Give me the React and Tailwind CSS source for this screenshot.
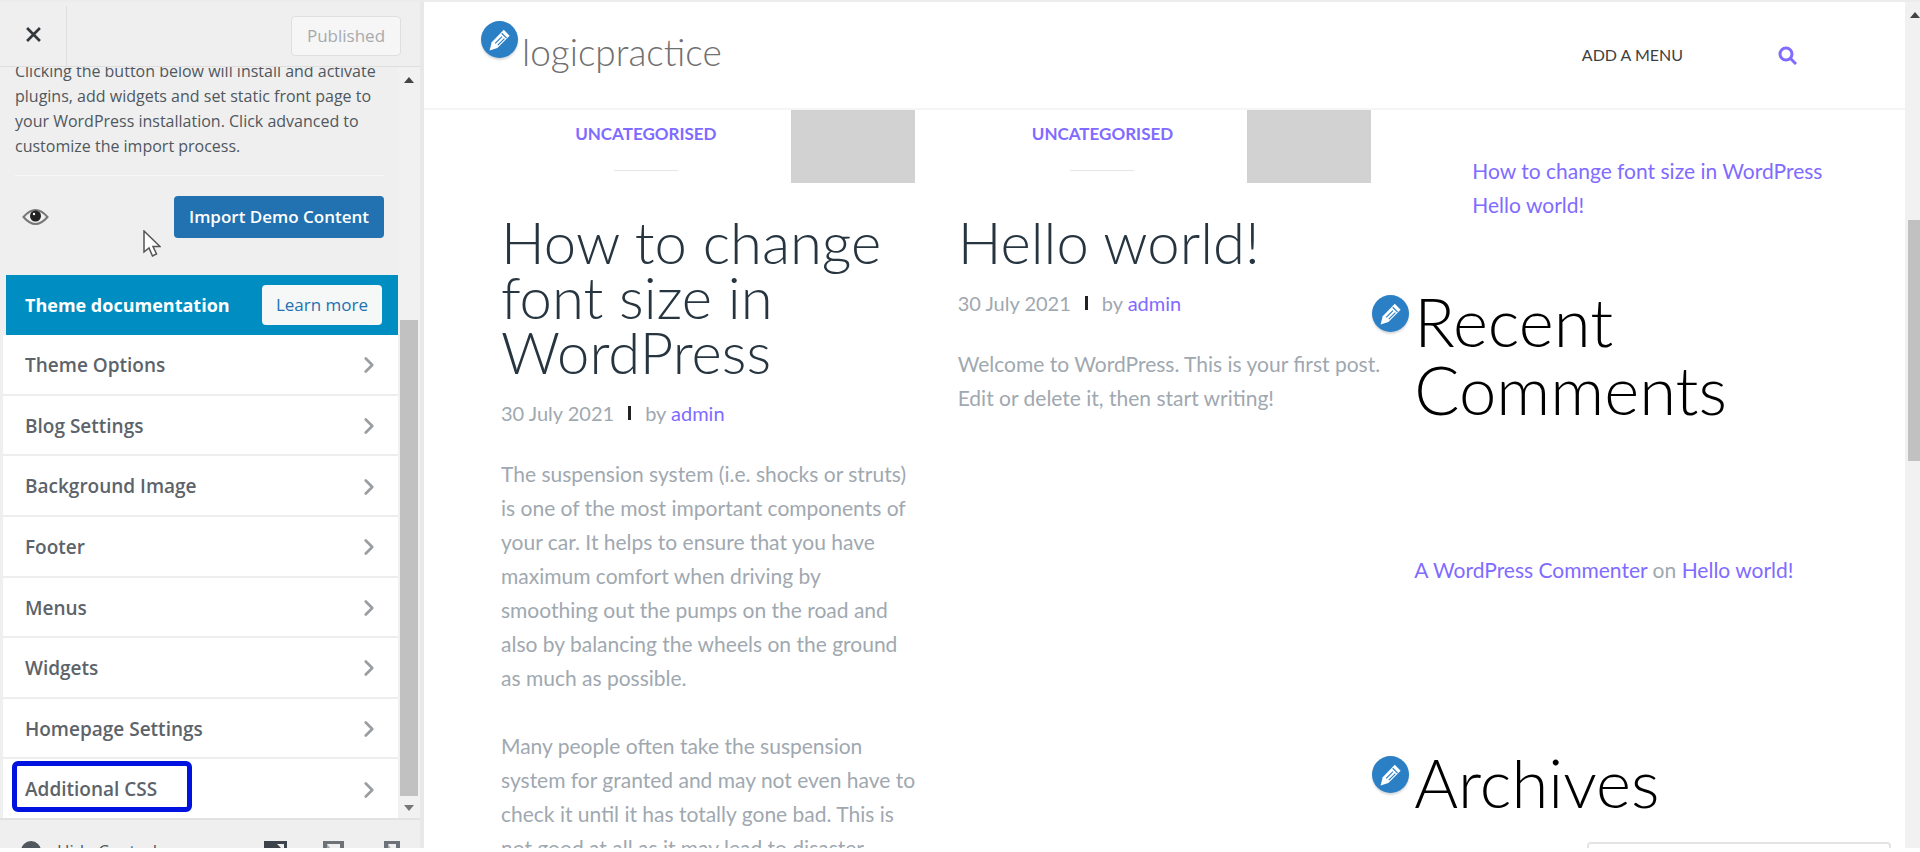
import { ChevronRight } from "lucide-react";

const SECTIONS = [
  "Theme Options",
  "Blog Settings",
  "Background Image",
  "Footer",
  "Menus",
  "Widgets",
  "Homepage Settings",
  "Additional CSS",
];

const POSTS = [
  {
    title: ["How to change", "font size in", "WordPress"],
    body: [
      [
        "The suspension system (i.e. shocks or struts)",
        "is one of the most important components of",
        "your car. It helps to ensure that you have",
        "maximum comfort when driving by",
        "smoothing out the pumps on the road and",
        "also by balancing the wheels on the ground",
        "as much as possible.",
      ],
      [
        "Many people often take the suspension",
        "system for granted and may not even have to",
        "check it until it has totally gone bad. This is",
        "not good at all as it may lead to disaster",
      ],
    ],
  },
  {
    title: ["Hello world!"],
    body: [["Welcome to WordPress. This is your first post.", "Edit or delete it, then start writing!"]],
  },
];

const Lines = ({ lines }) => lines.map((line) => <span key={line} className="block">{line}</span>);

const EditButton = ({ label, className }) => (
  <button
    aria-label={label}
    className={`absolute flex size-[37px] items-center justify-center rounded-full bg-[#2a7fc5] shadow-[0_2px_2px_rgba(60,67,74,0.2)] ${className}`}
  >
    <svg viewBox="0 0 20 20" className="size-[26px]" fill="#fff">
      <path d="M12.9 2.2 17.4 6.7 8 16.2 2 18 3.6 11.7Z" />
      <path d="M6.300 12.600 11.500 7.400M8.300 14 13.400 8.900M11.300 4.800 15.100 8.600" stroke="#2a7fc5" strokeWidth="0.9" fill="none" />
    </svg>
  </button>
);

const Arrow = ({ down }) => (
  <svg viewBox="0 0 10 6" className="h-[6px] w-[10px]" fill={down ? "#777" : "#444"}>
    <path d={down ? "M0 0H10L5 6Z" : "M0 6H10L5 0Z"} />
  </svg>
);

const Customizer = () => (
  <aside className="flex w-[424px] shrink-0 flex-col border-r-4 border-[#e8e8e8] bg-[#efefef] font-['Open_Sans',sans-serif] text-[#50575e]">
    {/* Top bar */}
    <div className="flex h-[65px] shrink-0 items-center justify-between border-b border-[#dedede] pt-1 pr-[19px]">
      <button aria-label="Close" className="flex h-full w-[67px] items-center justify-center border-r border-[#dedede] pb-1">
        <svg viewBox="0 0 14 14" className="size-[15px]" stroke="#32373c" strokeWidth="2.5">
          <path d="M1 1 13 13M13 1 1 13" />
        </svg>
      </button>
      <button disabled className="h-10 w-[110px] rounded border border-[#dfdfdf] bg-[#f6f6f6] text-[17px] text-[#a7aaad]">
        Published
      </button>
    </div>

    <div className="relative flex min-h-0 flex-1">
      <div className="flex min-w-0 flex-1 flex-col">
        {/* Import panel */}
        <div className="h-52 shrink-0 overflow-hidden pr-3.5 pl-[15px]">
          <p className="-mt-2 border-b border-[#f8f8f8] pb-4 text-base leading-[25px] whitespace-nowrap">
            <Lines
              lines={[
                "Clicking the button below will install and activate",
                "plugins, add widgets and set static front page to",
                "your WordPress installation. Click advanced to",
                "customize the import process.",
              ]}
            />
          </p>
          <div className="mt-5 flex items-center justify-between pl-[7px]">
            <button aria-label="Preview">
              <svg viewBox="0 0 26 18" className="h-[18px] w-[27px]" fill="none" stroke="#777" strokeWidth="2">
                <path d="M1 9Q7 2 13 2T25 9Q19 16 13 16T1 9Z" />
                <circle cx="13" cy="8" r="4.5" fill="#222" stroke="#222" />
                <circle cx="11.5" cy="6" r="1.2" fill="#fff" stroke="none" />
              </svg>
            </button>
            <button className="h-[42px] w-[210px] rounded bg-[#2271b1] text-[17px] font-semibold text-white">
              Import Demo Content
            </button>
          </div>
        </div>

        <div className="ml-1.5 flex h-[60px] shrink-0 items-center justify-between bg-[#008ec2] pr-4 pl-[19px]">
          <h3 className="text-lg font-bold text-white">Theme documentation</h3>
          <a href="#docs" className="flex h-10 w-[120px] items-center justify-center rounded-sm bg-[#f6f7f7] text-[17px] text-[#2271b1]">
            Learn more
          </a>
        </div>

        <ul className="ml-[3px] flex min-h-0 flex-1 flex-col bg-white">
          {SECTIONS.map((name) => (
            <li key={name} className="flex-1 border-b-2 border-[#eeeeee] last:border-b-0">
              <button className="flex h-full w-full items-center justify-between pt-0.5 pr-4 pl-[22px] text-[19px] font-semibold text-[#5c636a]">
                {name}
                <ChevronRight className="size-[26px] text-[#9a9ea2]" strokeWidth={2.5} />
              </button>
            </li>
          ))}
        </ul>
      </div>

      {/* Scrollbar */}
      <div className="flex w-[22px] shrink-0 flex-col items-center bg-[#f1f1f1] pt-2.5 pb-[7px]">
        <Arrow />
        <div className="mt-[237px] mb-[9px] w-[18px] flex-1 bg-[#c1c1c1]" />
        <Arrow down />
      </div>

      <div className="absolute bottom-1.5 left-3 h-[51px] w-[180px] rounded-md border-[5px] border-[#0012e0]" />
      <svg viewBox="0 0 18 27" className="absolute top-[163px] left-[143px] h-[27px] w-[18px]" fill="#fff" stroke="#555" strokeWidth="1.5">
        <path d="M1 1V22L6 18 9.500 26 13.500 24 10 16.500H17Z" />
      </svg>
    </div>

    {/* Bottom bar, cut by the window edge */}
    <div className="flex h-[30px] shrink-0 items-start overflow-hidden border-t-2 border-[#e2e2e2] pt-[21px] pl-[21px]">
      <button className="flex w-[243px] items-start gap-4 text-[17px] leading-5">
        <span className="size-5 rounded-full bg-[#50575e]" />
        Hide Controls
      </button>
      <button aria-label="Desktop">
        <svg viewBox="0 0 23 20" className="h-5 w-[23px]">
          <path d="M0 0H23V16H0Z" fill="#3c434a" />
          <path d="M13 3H20V10Z" fill="#efefef" />
        </svg>
      </button>
      <button aria-label="Tablet" className="ml-9">
        <svg viewBox="0 0 21 20" className="h-5 w-[21px]">
          <path d="M0 0H21V20H0Z" fill="#6c7278" />
          <path d="M4 3H17V20H4Z" fill="#efefef" />
          <path d="M4 3 14 16H4Z" fill="#a5a9ad" />
        </svg>
      </button>
      <button aria-label="Mobile" className="ml-10">
        <svg viewBox="0 0 16 20" className="h-5 w-4">
          <path d="M0 0H16V20H0Z" fill="#6c7278" />
          <path d="M4 3H12V20H4Z" fill="#efefef" />
          <path d="M4 3 11 14H4Z" fill="#a5a9ad" />
        </svg>
      </button>
    </div>
  </aside>
);

const Post = ({ title, body }) => (
  <article className="whitespace-nowrap">
    <div className="flex h-[73px]">
      <div className="flex flex-1 flex-col items-center pt-3">
        <a href="#category" className="text-[17px] leading-6 font-bold text-[#7f6bff]">UNCATEGORISED</a>
        <div className="mt-6 h-px w-16 bg-[#e6e6e6]" />
      </div>
      <div className="w-[124px] bg-[#d2d2d2]" />
    </div>
    <h2 className="mt-[31px] text-[58px] leading-[55px] font-light text-[#263540]">
      <Lines lines={title} />
    </h2>
    <div className="mt-[17px] flex items-center text-xl leading-[34px]">
      <span>30 July 2021</span>
      <span className="mx-3.5 h-3.5 w-[3px] bg-[#222]" />
      <span>by <a href="#admin" className="text-[#7f6bff]">admin</a></span>
    </div>
    {body.map((lines) => (
      <p key={lines[0]} className="mt-[27px] mb-[34px] text-[21px] leading-[34px] [p+&]:mt-0">
        <Lines lines={lines} />
      </p>
    ))}
  </article>
);

const Preview = () => (
  <main className="flex min-w-0 flex-1 flex-col overflow-hidden bg-white font-['Lato',sans-serif] text-[#a0a8b0]">
    <header className="flex h-[108px] shrink-0 items-center justify-between border-b-2 border-[#f5f5f5] pr-[108px] pl-[98px]">
      <div className="relative pb-1.5">
        <a href="#home" className="text-[37px] leading-[44px] font-light text-[#707070]">logicpractice</a>
        <EditButton label="Edit site title" className="-top-[9px] -left-[41px]" />
      </div>
      <nav className="flex items-center gap-[95px]">
        <a href="#menu" className="text-base text-[#404040]">ADD A MENU</a>
        <button aria-label="Search">
          <svg viewBox="0 0 19 19" className="size-[19px]" fill="none" stroke="#7f6bff" strokeWidth="3">
            <circle cx="8" cy="8" r="6" />
            <path d="M12.500 12.500 18 18" />
          </svg>
        </button>
      </nav>
    </header>

    <div className="grid min-h-0 flex-1 grid-cols-3 gap-[43px] px-[77px]">
      {POSTS.map((post) => <Post key={post.title[0]} {...post} />)}

      <section className="whitespace-nowrap">
        <ul className="pt-11 pl-[58px] text-[21px] leading-[34px] text-[#7f6bff]">
          <li><a href="#font-size">How to change font size in WordPress</a></li>
          <li><a href="#hello">Hello world!</a></li>
        </ul>
        <div className="relative mt-[65px]">
          <EditButton label="Edit recent comments" className="top-2 -left-[42px]" />
          <h2 className="text-[67px] leading-[68px] font-light text-black">
            <Lines lines={["Recent", "Comments"]} />
          </h2>
        </div>
        <p className="mt-[130px] text-[21px] leading-[34px]">
          <a href="#commenter" className="text-[#7f6bff]">A WordPress Commenter</a> on{" "}
          <a href="#hello" className="text-[#7f6bff]">Hello world!</a>
        </p>
        <div className="relative mt-[161px]">
          <EditButton label="Edit archives" className="top-2 -left-[42px]" />
          <h2 className="text-[67px] leading-[68px] font-light text-black">Archives</h2>
        </div>
        <select aria-label="Archives" className="mt-[26px] ml-[173px] h-12 w-[304px] rounded border-2 border-[#e4e4e4] bg-white">
          <option> </option>
        </select>
      </section>
    </div>
  </main>
);

export default function App() {
  return (
    <div className="h-screen overflow-hidden bg-white pb-1">
      <div className="flex h-full border-t-2 border-[#ececec]">
        <Customizer />
        <Preview />
        {/* Window scrollbar */}
        <div className="flex w-[15px] shrink-0 flex-col items-end overflow-hidden bg-[#f1f1f1] pt-2.5">
          <Arrow />
          <div className="mt-[202px] h-[241px] w-3 bg-[#c1c1c1]" />
        </div>
      </div>
    </div>
  );
}
